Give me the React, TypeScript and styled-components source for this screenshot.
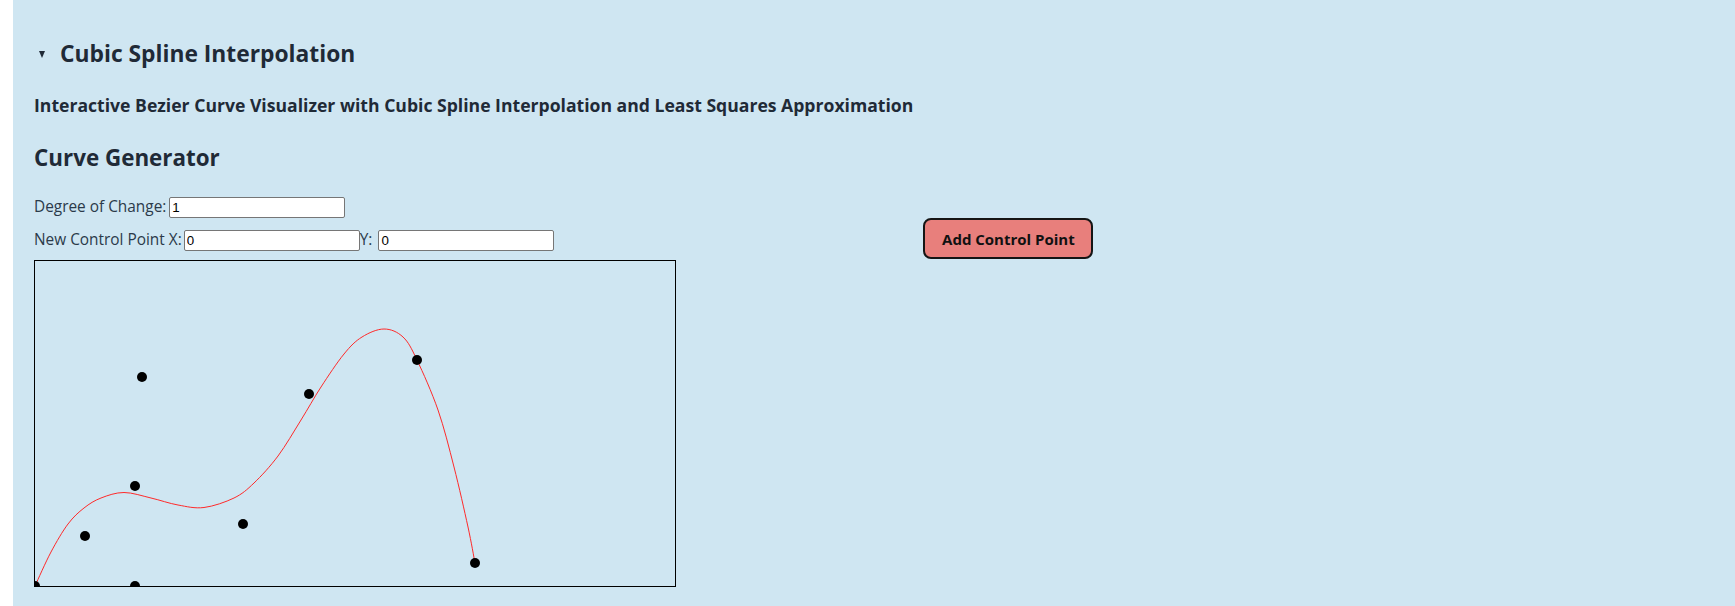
import React from "react";
import styled, { createGlobalStyle } from "styled-components";

const GlobalStyle = createGlobalStyle`
  html, body { margin: 0; padding: 0; background: #ffffff; }
  body { font-family: "Open Sans", "Noto Sans", sans-serif; }
  * { box-sizing: border-box; }
`;

const Panel = styled.main`
  display: flex;
  flex-direction: column;
  align-items: flex-start;
  margin-left: 13px;
  min-height: 100vh;
  padding: 36px 21px 20px;
  background: #cfe6f2;
  color: #1f2a37;
`;

const Summary = styled.div`
  display: flex;
  align-items: center;
  gap: 15px;
  height: 36px;
  padding-left: 5px;
`;

const Caret = styled.span`
  width: 0;
  height: 0;
  margin-top: 1px;
  border-left: 3.5px solid transparent;
  border-right: 3.5px solid transparent;
  border-top: 7px solid #1f2a37;
`;

const Title = styled.h2`
  margin: 0;
  font-size: 22.8px;
  font-weight: 700;
  line-height: 36px;
`;

const Subtitle = styled.h4`
  margin: 21px 0 0;
  font-size: 17.6px;
  font-weight: 700;
  line-height: 24px;
`;

const SectionTitle = styled.h3`
  margin: 27px 0 0;
  font-size: 22.4px;
  font-weight: 700;
  line-height: 28px;
`;

const FieldRow = styled.div<{ $top: number }>`
  display: flex;
  align-items: baseline;
  margin-top: ${(p) => p.$top}px;
  font-size: 15.4px;
  color: #2b3a4a;
`;

const FieldLabel = styled.label<{ $after: number }>`
  margin-right: ${(p) => p.$after}px;
  white-space: nowrap;
`;

const NumberInput = styled.input`
  width: 176px;
  height: 21px;
  padding: 1px 2px;
  border: 1px solid #767676;
  border-radius: 2px;
  background: #ffffff;
  color: #000000;
  font-family: "Liberation Sans", Arial, sans-serif;
  font-size: 13.33px;
`;

const AddButton = styled.button`
  height: 41px;
  width: 170px;
  margin-left: 369px;
  border: 2px solid #151515;
  border-radius: 8px;
  background: #e87f7c;
  color: #111111;
  font-family: "Open Sans", "Noto Sans", sans-serif;
  font-size: 15px;
  font-weight: 700;
  cursor: pointer;
`;

const Plot = styled.svg`
  display: block;
  margin-top: 1px;
  width: 642px;
  height: 327px;
  border: 1px solid #000000;
`;

const controlPoints: [number, number][] = [
  [0, 325],
  [50, 275],
  [100, 225],
  [107, 116],
  [100, 325],
  [208, 263],
  [274, 133],
  [382, 99],
  [440, 302],
];

const curveSamples: [number, number][] = [
  [0, 325],
  [16, 291],
  [33, 263],
  [49, 247],
  [66, 237],
  [89, 231.5],
  [116, 237],
  [143, 244],
  [169, 246.5],
  [199, 237],
  [219, 222],
  [243, 195],
  [266, 159],
  [286, 126],
  [309, 93],
  [327, 76],
  [349, 68],
  [368, 76],
  [382, 99],
  [403, 149],
  [419, 206],
  [433, 266],
  [440, 302],
];

function smoothPath(pts: [number, number][]): string {
  let d = `M ${pts[0][0]} ${pts[0][1]}`;
  for (let i = 0; i < pts.length - 1; i++) {
    const p0 = pts[Math.max(0, i - 1)];
    const p1 = pts[i];
    const p2 = pts[i + 1];
    const p3 = pts[Math.min(pts.length - 1, i + 2)];
    const c1x = p1[0] + (p2[0] - p0[0]) / 6;
    const c1y = p1[1] + (p2[1] - p0[1]) / 6;
    const c2x = p2[0] - (p3[0] - p1[0]) / 6;
    const c2y = p2[1] - (p3[1] - p1[1]) / 6;
    d += ` C ${c1x.toFixed(2)} ${c1y.toFixed(2)}, ${c2x.toFixed(2)} ${c2y.toFixed(2)}, ${p2[0]} ${p2[1]}`;
  }
  return d;
}

const curvePath = smoothPath(curveSamples);

export default function App() {
  return (
    <>
      <GlobalStyle />
      <Panel>
        <Summary>
          <Caret />
          <Title>Cubic Spline Interpolation</Title>
        </Summary>
        <Subtitle>
          Interactive Bezier Curve Visualizer with Cubic Spline Interpolation and Least Squares Approximation
        </Subtitle>
        <SectionTitle>Curve Generator</SectionTitle>
        <FieldRow $top={24}>
          <FieldLabel $after={3}>Degree of Change:</FieldLabel>
          <NumberInput type="text" defaultValue="1" />
        </FieldRow>
        <FieldRow $top={0}>
          <FieldLabel $after={2}>New Control Point X:</FieldLabel>
          <NumberInput type="text" defaultValue="0" />
          <FieldLabel $after={6}>Y:</FieldLabel>
          <NumberInput type="text" defaultValue="0" />
          <AddButton type="button">Add Control Point</AddButton>
        </FieldRow>
        <Plot viewBox="0 0 640 325">
          <path d={curvePath} fill="none" stroke="#ff2a2a" strokeWidth={1} />
          {controlPoints.map(([x, y], i) => (
            <circle key={i} cx={x} cy={y} r={5} fill="#000000" />
          ))}
        </Plot>
      </Panel>
    </>
  );
}
